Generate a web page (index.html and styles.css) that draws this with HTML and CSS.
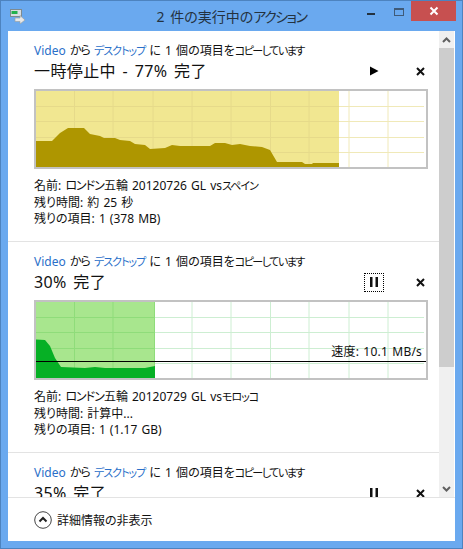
FILE: index.html
```html
<!DOCTYPE html>
<html lang="ja">
<head>
  <meta charset="UTF-8" />
  <title>2 件の実行中のアクション</title>
  <link rel="stylesheet" href="styles.css">
</head>
<body>
  <div class="window">
    <!-- Title bar -->
    <div class="titlebar">
      <svg class="app-icon" width="16" height="16" viewBox="0 0 16 16">
        <rect x="0.5" y="1.5" width="11" height="7" fill="#d8dde0" stroke="#7d8a90"/>
        <rect x="1.5" y="3" width="6" height="3" fill="#22b14c"/>
        <path d="M5 10h5V7.500l5 4.500-5 4v-2.500H5z" fill="#e8e8e8" stroke="#9aa3a8" stroke-width="0.7"/>
      </svg>
      <div class="title">2 件の実行中の<span class="kana">アクション</span></div>
      <div class="controls">
        <span class="min"></span>
        <span class="max"></span>
        <span class="close">
          <svg width="10" height="10" viewBox="0 0 10 10"><path d="M1.500 1.500l7 7M8.500 1.500l-7 7" stroke="#fff" stroke-width="2"/></svg>
        </span>
      </div>
    </div>

    <div class="content">
      <div class="scroller">
        <div class="list">
          <!-- First copy -->
          <div class="item">
            <div class="from"><a>Video</a> <span class="kana-sm">から</span> <a class="kana">デスクトップ</a> に 1 個の項目を<span class="kana tight">コピーしています</span></div>
            <div class="head">
              <div class="state">一時停止中 - 77% 完了</div>
              <div class="buttons">
                <span class="btn"><svg width="10" height="10" viewBox="0 0 10 10"><path d="M1 .5l8.500 4.500L1 9.500z" fill="#000"/></svg></span>
                <span class="btn"><svg width="9" height="9" viewBox="0 0 9 9"><path d="M1 1l7 7M8 1L1 8" stroke="#111" stroke-width="2"/></svg></span>
              </div>
            </div>
            <div class="chart">
              <svg width="390" height="76" viewBox="0 0 390 76">
                <path d="M38.500 0V76M77 0V76M117 0V76M156 0V76M195 0V76M234.500 0V76M273 0V76M313 0V76M352 0V76M0 15.500H388M0 30.500H388M0 46.500H388M0 61.500H388" stroke="#f0e9b8" fill="none"/>
                <rect width="303" height="76" fill="#f1e791"/>
                <path d="M38.500 0V76M77 0V76M117 0V76M156 0V76M195 0V76M234.500 0V76M273 0V76M0 15.500H303M0 30.500H303M0 46.500H303M0 61.500H303" stroke="#e6da8a" fill="none"/>
                <path d="M0 50L16 50L24 42L32 37L48 37L54 43L64 45L68 47L79 47L84 49L94 50L99 53L109 54L114 58L129 57L136 54L144 55L174 55L179 52L189 52L196 54L204 53L214 55L226 56L234 59L241 71L266 71L269 73L276 73L277 72L303 72L303 76L0 76Z" fill="#ae9600"/>
              </svg>
            </div>
            <div class="details">
              <div>名前: <span class="kana-sm">ロンドン</span>五輪 20120726 GL vs<span class="kana">スペイン</span></div>
              <div>残り時間: 約 25 秒</div>
              <div>残りの項目: 1 (378 MB)</div>
            </div>
          </div>

          <!-- Second copy -->
          <div class="item">
            <div class="from"><a>Video</a> <span class="kana-sm">から</span> <a class="kana">デスクトップ</a> に 1 個の項目を<span class="kana tight">コピーしています</span></div>
            <div class="head">
              <div class="state">30% 完了</div>
              <div class="buttons">
                <span class="btn focused"><svg width="8" height="10" viewBox="0 0 8 10"><path d="M0 0h2.500v10H0zM5.500 0H8v10H5.500z" fill="#111"/></svg></span>
                <span class="btn"><svg width="9" height="9" viewBox="0 0 9 9"><path d="M1 1l7 7M8 1L1 8" stroke="#111" stroke-width="2"/></svg></span>
              </div>
            </div>
            <div class="chart">
              <svg width="390" height="76" viewBox="0 0 390 76">
                <path d="M38.500 0V76M77 0V76M117 0V76M156 0V76M195 0V76M234.500 0V76M273 0V76M313 0V76M352 0V76M0 15.500H388M0 30.500H388M0 46.500H388M0 61.500H388" stroke="#cdeed2" fill="none"/>
                <rect width="119" height="76" fill="#a8e68e"/>
                <path d="M38.500 0V76M77 0V76M118.500 0V76M0 15.500H119M0 30.500H119M0 46.500H119" stroke="#8fdc7a" fill="none"/>
                <path d="M0 37.500L9 38L14 44L19 56L25 65L49 66L59 65L69 66L109 66L114 65L119 64L119 76L0 76Z" fill="#06b025"/>
                <path d="M0 59.500H390" stroke="#000" fill="none"/>
              </svg>
              <div class="speed">速度: 10.1 MB/s</div>
            </div>
            <div class="details">
              <div>名前: <span class="kana-sm">ロンドン</span>五輪 20120729 GL vs<span class="kana">モロッコ</span></div>
              <div>残り時間: 計算中...</div>
              <div>残りの項目: 1 (1.17 GB)</div>
            </div>
          </div>

          <!-- Third copy, cut off by the list -->
          <div class="item">
            <div class="from"><a>Video</a> <span class="kana-sm">から</span> <a class="kana">デスクトップ</a> に 1 個の項目を<span class="kana tight">コピーしています</span></div>
            <div class="head">
              <div class="state">35% 完了</div>
              <div class="buttons">
                <span class="btn"><svg width="8" height="10" viewBox="0 0 8 10"><path d="M0 0h2.500v10H0zM5.500 0H8v10H5.500z" fill="#111"/></svg></span>
                <span class="btn"><svg width="9" height="9" viewBox="0 0 9 9"><path d="M1 1l7 7M8 1L1 8" stroke="#111" stroke-width="2"/></svg></span>
              </div>
            </div>
          </div>
        </div>

        <div class="scrollbar">
          <div class="arrow arrow-up">
            <svg width="9" height="6" viewBox="0 0 9 6"><path d="M1 5l3.500-3.500L8 5" fill="none" stroke="#606060" stroke-width="2"/></svg>
          </div>
          <div class="thumb"></div>
          <div class="track"></div>
          <div class="arrow">
            <svg width="9" height="6" viewBox="0 0 9 6"><path d="M1 1l3.500 3.500L8 1" fill="none" stroke="#606060" stroke-width="2"/></svg>
          </div>
        </div>
      </div>

      <div class="footer">
        <svg width="18" height="18" viewBox="0 0 18 18">
          <circle cx="9" cy="9" r="8.300" fill="#fff" stroke="#444"/>
          <path d="M5.500 10.500L9 7l3.500 3.500" fill="none" stroke="#222" stroke-width="2"/>
        </svg>
        <span>詳細情報の非表示</span>
      </div>
    </div>
  </div>
</body>
</html>
```

FILE: styles.css
```css
html, body {
  margin: 0;
  padding: 0;
}
body {
  font-family: "Noto Sans", "Noto Sans CJK JP", sans-serif;
  font-size: 12px;
  font-feature-settings: "palt";
  word-spacing: 1px;
  color: #111;
  background: #6aa9ef;
}
.window {
  box-sizing: border-box;
  width: 463px;
  height: 549px;
  display: flex;
  flex-direction: column;
  background: #6aa9ef;
  border: 1px solid #4d83bf;
  padding: 0 7px 7px;
}

/* the reference font has narrow kana */
.kana {
  font-size: 11px;
  letter-spacing: -1px;
}
.kana.tight {
  letter-spacing: -1.500px;
}
.kana-sm {
  letter-spacing: -1px;
}

/* title bar */
.titlebar {
  height: 30px;
  flex: none;
  display: grid;
  grid-template-columns: 1fr auto 1fr;
  align-items: start;
}
.app-icon {
  margin: 7px 0 0 2px;
}
.title {
  font-size: 14px;
  line-height: 20px;
  margin-top: 6px;
  word-spacing: 2px;
  color: #24323f;
}
.title .kana {
  font-size: 14px;
  letter-spacing: -1.500px;
}
.controls {
  display: flex;
  justify-content: flex-end;
  align-items: flex-start;
  margin-right: -1px;
}
.min {
  width: 8px;
  height: 2px;
  margin: 12px 19px 0 0;
  background: #24323f;
}
.max {
  box-sizing: border-box;
  width: 10px;
  height: 8px;
  margin: 7px 7px 0 0;
  border: 1px solid #3f5a78;
  border-top-width: 2px;
}
.close {
  width: 45px;
  height: 20px;
  background: #c75050;
  display: flex;
  align-items: center;
  justify-content: center;
}

/* client area */
.content {
  flex: 1;
  min-height: 0;
  display: flex;
  flex-direction: column;
  background: #fff;
}
.scroller {
  flex: 1;
  min-height: 0;
  display: flex;
}
.list {
  flex: 1;
  min-width: 0;
  overflow: hidden;
}
.item {
  box-sizing: border-box;
  height: 211px;
  flex: none;
  padding: 12px 9px 0 26px;
  border-bottom: 1px solid #e3e3e3;
}
.from {
  line-height: 16px;
  white-space: nowrap;
}
.from a {
  color: #2a6fc9;
}
.head {
  height: 22px;
  margin: 1px 0 7px;
  display: flex;
  align-items: center;
  justify-content: space-between;
}
.state {
  font-size: 16px;
  line-height: 22px;
  letter-spacing: .4px;
  word-spacing: 2px;
  white-space: nowrap;
}
.buttons {
  display: flex;
  gap: 26px;
}
.btn {
  box-sizing: border-box;
  width: 20px;
  height: 19px;
  display: flex;
  align-items: center;
  justify-content: center;
}
.focused {
  border: 1px dotted #000;
}
.chart {
  position: relative;
  box-sizing: border-box;
  width: 394px;
  height: 80px;
  border: 2px solid #c2c2c2;
  background: #fff;
}
.chart svg {
  display: block;
}
.speed {
  position: absolute;
  right: 4px;
  top: 42px;
  line-height: 16px;
  letter-spacing: .2px;
  white-space: nowrap;
}
.details {
  margin-top: 9px;
  line-height: 16.500px;
  white-space: nowrap;
}

/* scrollbar */
.scrollbar {
  width: 15px;
  margin-right: 1px;
  flex: none;
  display: flex;
  flex-direction: column;
  background: #f0f0f0;
}
.arrow {
  height: 17px;
  flex: none;
  display: flex;
  align-items: center;
  justify-content: center;
}
.arrow-up {
  background: #f0f0f0;
}
.thumb {
  height: 319px;
  flex: none;
  background: #cdcdcd;
}
.track {
  flex: 1;
}

/* footer */
.footer {
  height: 43px;
  flex: none;
  display: flex;
  align-items: center;
  gap: 5px;
  padding-left: 26px;
  border-top: 1px solid #e3e3e3;
}
```
